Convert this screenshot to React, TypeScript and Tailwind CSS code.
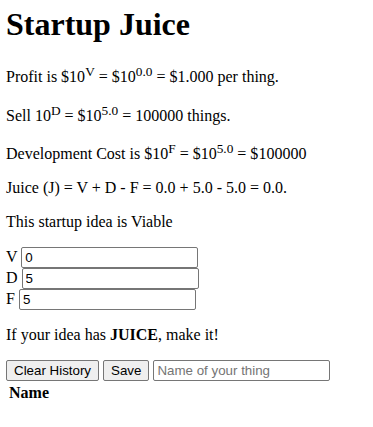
import React, { useState } from "react";

function Sup({ children }: { children: React.ReactNode }) {
  return (
    <sup className="static align-super text-[13.333px] leading-[normal]">
      {children}
    </sup>
  );
}

const inputCls =
  "w-[177px] h-[21px] border border-[#767676] rounded-[2px] px-[3px] py-[2px] font-['Liberation_Sans',Arial,sans-serif] text-[13.333px] leading-[normal] text-black bg-white align-baseline outline-none placeholder:text-[#757575]";

const buttonCls =
  "h-[21px] border border-[#767676] rounded-[2px] bg-[#efefef] px-[7px] py-[2px] font-['Liberation_Sans',Arial,sans-serif] text-[13.333px] leading-[normal] text-black align-baseline";

export default function App() {
  const [v, setV] = useState("0");
  const [d, setD] = useState("5");
  const [f, setF] = useState("5");
  const [name, setName] = useState("");

  const V = parseFloat(v) || 0;
  const D = parseFloat(d) || 0;
  const F = parseFloat(f) || 0;
  const J = V + D - F;

  return (
    <div className="min-h-[427px] bg-white px-[6px] pt-[6px] pb-2 font-['Liberation_Serif','Times_New_Roman',serif] text-base leading-[normal] text-black">
      <h1 className="mb-[21.44px] text-[32px] font-bold leading-[normal]">
        Startup Juice
      </h1>
      <p className="my-4">
        Profit is $10<Sup>V</Sup> = $10<Sup>{V.toFixed(1)}</Sup> = $
        {Math.pow(10, V).toFixed(3)} per thing.
      </p>
      <p className="my-4">
        Sell 10<Sup>D</Sup> = $10<Sup>{D.toFixed(1)}</Sup> ={" "}
        {Math.round(Math.pow(10, D))} things.
      </p>
      <p className="my-4">
        Development Cost is $10<Sup>F</Sup> = $10<Sup>{F.toFixed(1)}</Sup> = $
        {Math.round(Math.pow(10, F))}
      </p>
      <p className="my-4">
        Juice (J) = V + D - F = {V.toFixed(1)} + {D.toFixed(1)} -{" "}
        {F.toFixed(1)} = {J.toFixed(1)}.
      </p>
      <p className="my-4">This startup idea is {J >= 0 ? "Viable" : "Not Viable"}</p>
      <div className="my-4">
        <div>
          V <input className={inputCls} value={v} onChange={(e) => setV(e.target.value)} />
        </div>
        <div>
          D <input className={inputCls} value={d} onChange={(e) => setD(e.target.value)} />
        </div>
        <div>
          F <input className={inputCls} value={f} onChange={(e) => setF(e.target.value)} />
        </div>
      </div>
      <p className="my-4">
        If your idea has <b className="font-bold">JUICE</b>, make it!
      </p>
      <div>
        <button className={buttonCls}>Clear History</button>{" "}
        <button className={buttonCls}>Save</button>{" "}
        <input
          className={inputCls}
          placeholder="Name of your thing"
          value={name}
          onChange={(e) => setName(e.target.value)}
        />
      </div>
      <table className="border-separate border-spacing-[2px]">
        <thead>
          <tr>
            <th className="p-px text-center font-bold">Name</th>
          </tr>
        </thead>
        <tbody></tbody>
      </table>
    </div>
  );
}
